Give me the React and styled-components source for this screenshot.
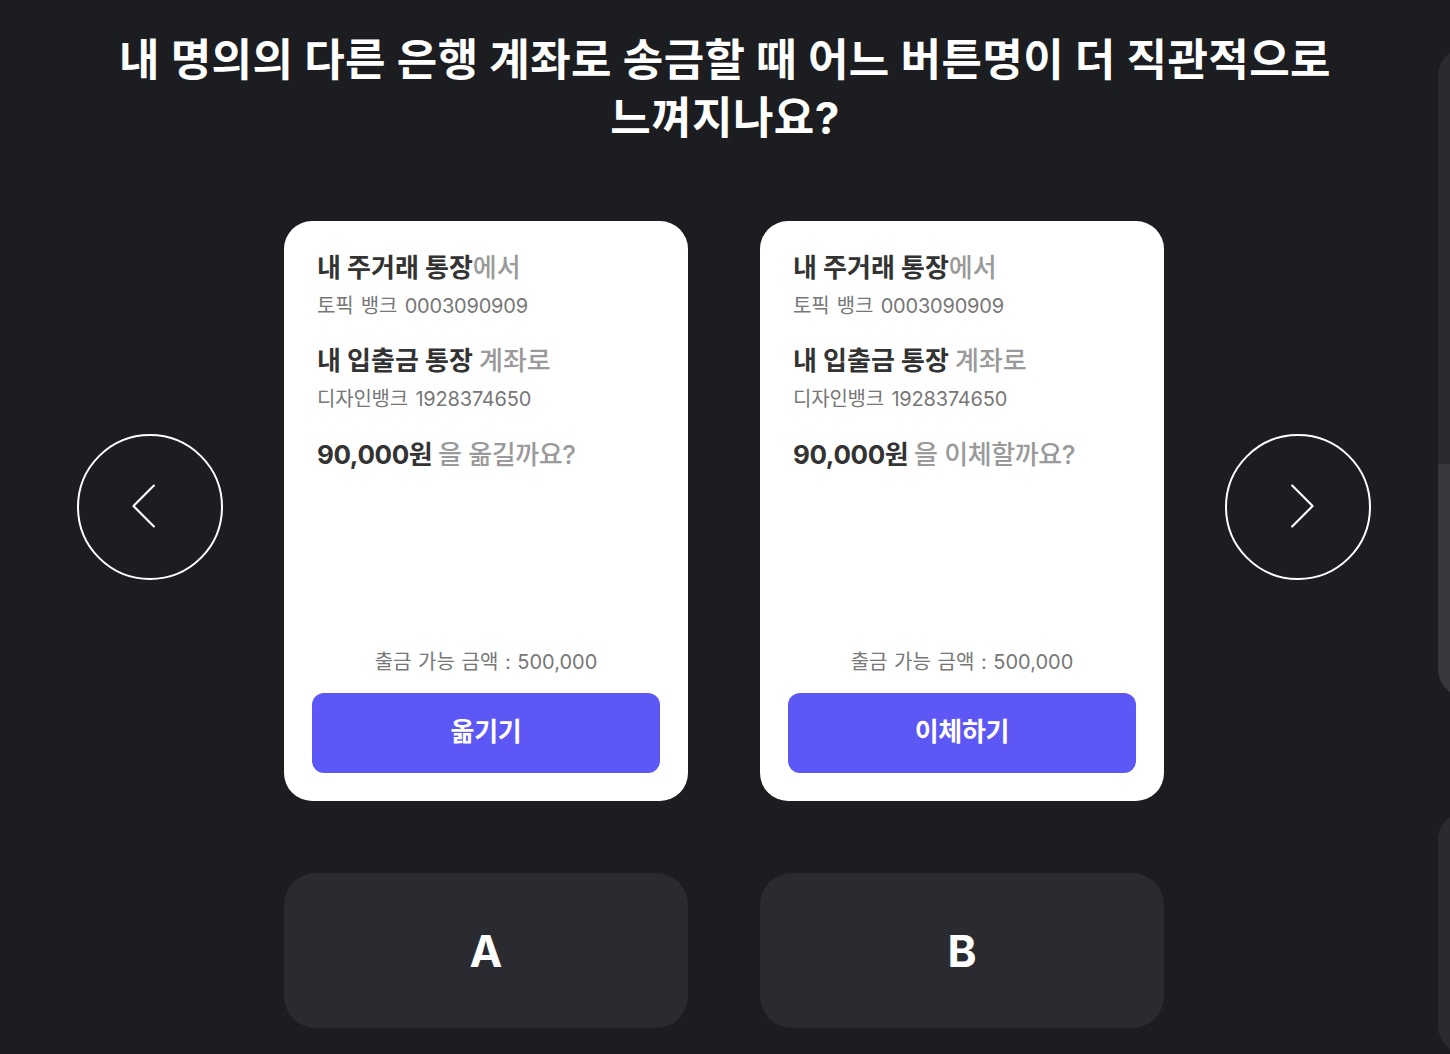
import React from "react";
import styled, { createGlobalStyle } from "styled-components";

const Global = createGlobalStyle`
  html, body { margin: 0; padding: 0; background: #1c1d21; }
  body { font-family: Inter, "Noto Sans CJK KR", sans-serif; }
  * { box-sizing: border-box; }
`;

const Viewport = styled.div`
  width: 1450px;
  height: 1054px;
  overflow: hidden;
  display: flex;
  background: #1c1d21;
`;

const Slide = styled.section`
  flex: 0 0 1450px;
  display: flex;
  flex-direction: column;
  align-items: center;
`;

const Title = styled.h1`
  margin: 31px 0 0;
  color: #ffffff;
  font-family: Inter, "Noto Sans CJK KR", sans-serif;
  font-weight: 700;
  font-size: 44px;
  line-height: 58px;
  letter-spacing: 0.4px;
  text-align: center;
  white-space: nowrap;
`;

const Carousel = styled.div`
  margin-top: 74px;
  display: flex;
  align-items: center;
  gap: 61px;
  padding-right: 2px;
`;

const Cards = styled.div`
  display: flex;
  gap: 72px;
`;

const NavButton = styled.button`
  width: 146px;
  height: 146px;
  padding: 0;
  margin-bottom: 8px;
  border-radius: 50%;
  border: 2px solid #ffffff;
  background: transparent;
  display: flex;
  align-items: center;
  justify-content: center;
  cursor: pointer;
  svg { display: block; }
`;

const Card = styled.article`
  width: 404px;
  height: 580px;
  background: #ffffff;
  border-radius: 28px;
  padding: 29px 28px 28px;
  display: flex;
  flex-direction: column;
`;

const Info = styled.div`
  padding-left: 5px;
  display: flex;
  flex-direction: column;
  gap: 23px;
`;

const Group = styled.div`
  display: flex;
  flex-direction: column;
  gap: 6px;
`;

const Heading = styled.div`
  font-family: Inter, "Noto Sans CJK KR", sans-serif;
  font-size: 26px;
  line-height: 36px;
  font-weight: 700;
  color: #333333;
  white-space: nowrap;
  letter-spacing: ${(p) => (p.$tight ? "-0.4px" : "0")};
  margin-top: ${(p) => (p.$tight ? "1px" : "0")};
`;

const Muted = styled.span`
  color: #9a9a9a;
  font-weight: ${(p) => (p.$light ? 500 : 700)};
`;

const Sub = styled.div`
  font-family: Inter, "Noto Sans CJK KR", sans-serif;
  font-size: 20px;
  line-height: 28px;
  font-weight: 400;
  color: #777777;
  letter-spacing: -0.2px;
  word-spacing: 2px;
`;

const Footer = styled.div`
  margin-top: auto;
  display: flex;
  flex-direction: column;
  gap: 17px;
`;

const Available = styled.div`
  text-align: center;
  font-family: Inter, "Noto Sans CJK KR", sans-serif;
  font-size: 20px;
  line-height: 28px;
  color: #777777;
  word-spacing: 1px;
`;

const PrimaryButton = styled.button`
  height: 80px;
  width: 100%;
  border: none;
  border-radius: 12px;
  padding: 0 0 8px;
  background: #5d57f5;
  color: #ffffff;
  font-family: Inter, "Noto Sans CJK KR", sans-serif;
  font-size: 26px;
  font-weight: 700;
  letter-spacing: -0.3px;
  cursor: pointer;
`;

const Options = styled.div`
  margin-top: 72px;
  display: flex;
  gap: 72px;
  padding-right: 2px;
`;

const Option = styled.button`
  width: 404px;
  height: 155px;
  border: none;
  border-radius: 32px;
  background: #2a2b30;
  color: #ffffff;
  font-family: Inter, "Noto Sans CJK KR", sans-serif;
  font-size: 44px;
  font-weight: 700;
  cursor: pointer;
`;

const NextSlide = styled.section`
  flex: 0 0 300px;
  margin-left: -12px;
  padding-top: 48px;
  display: flex;
  flex-direction: column;
  gap: 115px;
`;

const PeekPanel = styled.div`
  border-radius: 28px;
  overflow: hidden;
  display: flex;
  flex-direction: column;
  height: ${(p) => p.$h}px;
  background: #2a2b30;
`;

const PeekPart = styled.div`
  height: ${(p) => p.$h}px;
  background: ${(p) => p.$bg};
`;

const Chevron = ({ dir }) => (
  <svg width="146" height="146" viewBox="0 0 146 146" fill="none">
    {dir === "left" ? (
      <polyline points="77,51 56,72 77,93" stroke="#fff" strokeWidth="2.2" strokeLinecap="round" strokeLinejoin="round" />
    ) : (
      <polyline points="67,51 88,72 67,93" stroke="#fff" strokeWidth="2.2" strokeLinecap="round" strokeLinejoin="round" />
    )}
  </svg>
);

const variants = [
  { verb: "옮길까요?", button: "옮기기" },
  { verb: "이체할까요?", button: "이체하기" },
];

function TransferCard({ verb, button }) {
  return (
    <Card>
      <Info>
        <Group>
          <Heading>
            내 주거래 통장<Muted $light>에서</Muted>
          </Heading>
          <Sub>토픽 뱅크 0003090909</Sub>
        </Group>
        <Group>
          <Heading>
            내 입출금 통장 <Muted $light>계좌로</Muted>
          </Heading>
          <Sub>디자인뱅크 1928374650</Sub>
        </Group>
        <Heading $tight>
          90,000원 <Muted $light>을 {verb}</Muted>
        </Heading>
      </Info>
      <Footer>
        <Available>출금 가능 금액 : 500,000</Available>
        <PrimaryButton>{button}</PrimaryButton>
      </Footer>
    </Card>
  );
}

export default function App() {
  return (
    <>
      <Global />
      <Viewport>
        <Slide>
          <Title>
            내 명의의 다른 은행 계좌로 송금할 때 어느 버튼명이 더 직관적으로
            <br />
            느껴지나요?
          </Title>
          <Carousel>
            <NavButton aria-label="이전">
              <Chevron dir="left" />
            </NavButton>
            <Cards>
              {variants.map((v) => (
                <TransferCard key={v.button} {...v} />
              ))}
            </Cards>
            <NavButton aria-label="다음">
              <Chevron dir="right" />
            </NavButton>
          </Carousel>
          <Options>
            <Option>A</Option>
            <Option>B</Option>
          </Options>
        </Slide>
        <NextSlide>
          <PeekPanel $h={697}>
            <PeekPart $h={447} $bg="#2a2b30" />
            <PeekPart $h={250} $bg="#37383d" />
          </PeekPanel>
          <PeekPanel $h={260} />
        </NextSlide>
      </Viewport>
    </>
  );
}
